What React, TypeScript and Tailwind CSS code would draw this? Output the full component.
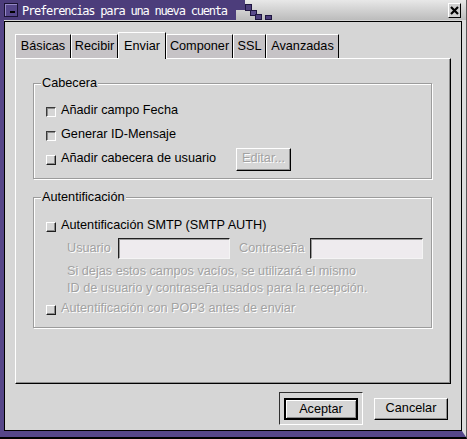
import clsx from "clsx";

const DIS = "text-[#a2a2a2] [text-shadow:1px_1px_0_#ffffff]";

const TABS = [
  { label: "Básicas", w: "w-[56px]" },
  { label: "Recibir", w: "w-[47px]" },
  { label: "Enviar", w: "w-[48px]", active: true },
  { label: "Componer", w: "w-[67px]" },
  { label: "SSL", w: "w-[33px]" },
  { label: "Avanzadas", w: "w-[73px]" },
];

// motif style indicator: sunken = on, raised = off
function Check({ on = false }: { on?: boolean }) {
  return (
    <span
      className={clsx(
        "mt-[2px] h-[10px] w-[10px] shrink-0 border bg-[#d6d6d6]",
        on
          ? "border-t-[#3a3a3a] border-l-[#3a3a3a] border-r-white border-b-white shadow-[inset_1px_1px_0_#8a8a8a]"
          : "border-t-white border-l-white border-r-[#1e1e1e] border-b-[#1e1e1e] shadow-[inset_-1px_-1px_0_#8a8a8a]"
      )}
    />
  );
}

function CheckRow({
  on,
  disabled,
  children,
  className,
}: {
  on?: boolean;
  disabled?: boolean;
  children: React.ReactNode;
  className?: string;
}) {
  return (
    <div className={clsx("flex h-[24px] items-center gap-[5px]", className)}>
      <Check on={on} />
      <span className={clsx("whitespace-nowrap", disabled && DIS)}>{children}</span>
    </div>
  );
}

function Group({ title, children }: { title: string; children: React.ReactNode }) {
  return (
    <fieldset className="mr-[18px] ml-[17px] border border-[#9c9c9c] shadow-[inset_1px_1px_0_#ffffff,1px_1px_0_#ffffff]">
      <legend className="ml-[7px] bg-[#d6d6d6] px-[1px] leading-[15px]">{title}</legend>
      {children}
    </fieldset>
  );
}

function Field({ w }: { w: string }) {
  return (
    <div
      className={clsx(
        "h-[21px] border border-t-[#202020] border-l-[#202020] border-r-[#f4f4f4] border-b-[#f4f4f4] bg-[#eeebee] shadow-[inset_1px_1px_0_#9a9a9a]",
        w
      )}
    />
  );
}

function TitleBar() {
  return (
    <div className="flex h-[20px] shrink-0">
      <div className="flex w-[236px] items-center bg-[#4c3d7b] pl-[4px]">
        <span className="relative h-[14px] w-[14px] border border-[#1a1233] bg-[#55468a] shadow-[inset_1px_1px_0_#9488c4]">
          <span className="absolute top-[7px] left-[5px] h-[2px] w-[5px] bg-black" />
        </span>
        <span className="mt-[2px] ml-[4px] font-['DejaVu_Sans_Mono',monospace] text-[12px] leading-[18px] tracking-[-1.2px] whitespace-nowrap text-white">
          Preferencias para una nueva cuenta
        </span>
      </div>
      <div className="flex flex-1 items-center justify-between bg-linear-to-b from-[#e8e8e8] to-[#bcbcbc] pr-[5px]">
        <svg width="40" height="20" className="self-start">
          <rect x="0" y="0" width="9" height="10" fill="#4c3d7b" />
          <rect x="9.5" y="4.5" width="6" height="6" fill="#4c3d7b" stroke="#1e1540" />
          <rect x="14.5" y="10.5" width="6" height="5" fill="#5a4b8c" stroke="#1e1540" />
          <rect x="19.5" y="14.5" width="6" height="5" fill="#4c3d7b" stroke="#1e1540" />
          <rect x="29.5" y="15.5" width="6" height="4" fill="#4c3d7b" stroke="#1e1540" />
        </svg>
        <span className="flex h-[15px] w-[13px] items-center justify-center border border-t-white border-l-white border-r-black border-b-black bg-[#cfcfcf]">
          <svg width="9" height="9" viewBox="0 0 9 9">
            <path d="M1 1 L8 8 M8 1 L1 8" stroke="#000" strokeWidth="2.2" />
          </svg>
        </span>
      </div>
    </div>
  );
}

export default function App() {
  return (
    <div className="flex h-[439px] w-[467px] flex-col overflow-hidden border-r border-b-2 border-r-[#5a5a5a] border-b-black bg-[#d6d6d6] font-['Liberation_Sans',Arial,sans-serif] text-[12.7px] text-black">
      <TitleBar />
      <div className="flex min-h-0 flex-1 border-l-4 border-r-4 border-b-[6px] border-l-[#564689] border-r-[#dcdcdc] border-b-[#564689] bg-[#d6d6d6]">
        <div className="mt-px flex flex-1 flex-col border border-black px-[10px] pt-[10px]">
          {/* tabs */}
          <div className="flex h-[26px] items-end">
            {TABS.map((t) =>
              t.active ? (
                <div
                  key={t.label}
                  className={clsx(
                    "relative z-10 -mb-px flex h-[27px] items-center justify-center border-t border-r border-l border-t-white border-r-black border-l-white bg-[#d6d6d6] leading-[27px]",
                    t.w
                  )}
                >
                  {t.label}
                </div>
              ) : (
                <div
                  key={t.label}
                  className={clsx(
                    "flex h-[24px] items-center justify-center border-t border-r border-l border-t-white border-r-black border-l-white bg-[#c6c3c6]",
                    t.w
                  )}
                >
                  {t.label}
                </div>
              )
            )}
          </div>

          {/* notebook page */}
          <div className="h-[326px] border border-t-white border-r-black border-b-black border-l-white pt-[17px] shadow-[inset_-1px_-1px_0_#8e8e8e]">
            <Group title="Cabecera">
              <div className="pt-[8px] pb-[7px] pl-[12px]">
                <CheckRow on>Añadir campo Fecha</CheckRow>
                <CheckRow on>Generar ID-Mensaje</CheckRow>
                <div className="flex h-[24px] items-center">
                  <CheckRow className="w-[190px]">Añadir cabecera de usuario</CheckRow>
                  <div
                    className={clsx(
                      "flex h-[23px] w-[55px] items-center justify-center border border-t-white border-r-black border-b-black border-l-white shadow-[inset_-1px_-1px_0_#8e8e8e]",
                      DIS
                    )}
                  >
                    Editar...
                  </div>
                </div>
              </div>
            </Group>

            <div className="h-[11px]" />

            <Group title="Autentificación">
              <div className="pt-[9px] pb-[6px] pl-[12px]">
                <CheckRow>Autentificación SMTP (SMTP AUTH)</CheckRow>
                <div className="flex h-[21px] items-center pl-[21px]">
                  <span className={clsx("w-[51px]", DIS)}>Usuario</span>
                  <Field w="w-[112px]" />
                  <span className={clsx("ml-[9px] w-[71px]", DIS)}>Contraseña</span>
                  <Field w="w-[113px]" />
                </div>
                <div className={clsx("mt-[4px] pl-[21px] leading-[17px]", DIS)}>
                  <div>Si dejas estos campos vacíos, se utilizará el mismo</div>
                  <div>ID de usuario y contraseña usados para la recepción.</div>
                </div>
                <CheckRow disabled>Autentificación con POP3 antes de enviar</CheckRow>
              </div>
            </Group>
          </div>

          {/* dialog buttons */}
          <div className="mt-[8px] flex items-center justify-end gap-[11px] pr-[3px]">
            <div className="border border-t-[#303030] border-r-white border-b-white border-l-[#303030] px-[4px] pt-[5px] pb-[4px]">
              <button className="h-[22px] w-[74px] border-2 border-black bg-[#d6d6d6] shadow-[inset_1px_1px_0_#ffffff,inset_-1px_-1px_0_#8e8e8e]">
                Aceptar
              </button>
            </div>
            <button className="h-[22px] w-[74px] border border-t-white border-r-black border-b-black border-l-white shadow-[inset_-1px_-1px_0_#8e8e8e]">
              Cancelar
            </button>
          </div>
        </div>
      </div>
    </div>
  );
}
